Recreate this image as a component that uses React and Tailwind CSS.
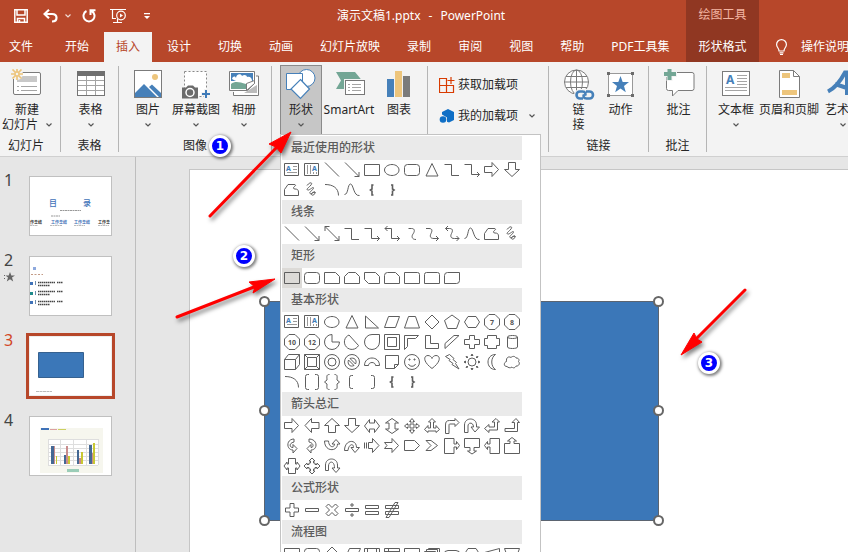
import React, { useState } from "react";

const Chevron = ({ className = "" }) => (
  <svg width="6" height="4" viewBox="0 0 6 4" fill="none" stroke="currentColor" strokeWidth="1.2" className={className}>
    <path d="M.5 .5L3 3 5.5 .5" />
  </svg>
);

const Icon = ({ children }) => (
  <svg width="32" height="32" viewBox="0 0 32 32" fill="none" className="block h-8 w-8 shrink-0">
    {children}
  </svg>
);

// ---------- ribbon icons ----------
const icons = {
  newSlide: (
    <Icon>
      <rect x="2.500" y="3.500" width="27" height="22" rx="1.500" fill="#fff" stroke="#7b7b7b" />
      <path d="M11 7h15v6H6v-3z" fill="#c8c8c8" />
      <path d="M6 17.500h2M10 17.500h16M6 21.500h2M10 21.500h16" stroke="#a5a5a5" />
      <circle cx="6" cy="5" r="6" fill="#f3f3f3" />
      <circle cx="6" cy="5" r="2" stroke="#edc57c" strokeWidth="1.500" />
      <path d="M6-1v4M6 7v4M0 5h4M8 5h4M1.500 .5l3 3M7.500 6.500l3 3M10.500 .5l-3 3M4.500 6.500l-3 3" stroke="#edc57c" strokeWidth="1.700" />
    </Icon>
  ),
  table: (
    <Icon>
      <rect x="2.500" y="2.500" width="27" height="24" fill="#fff" stroke="#747474" />
      <path d="M2 2h28v5H2z" fill="#6f6f6f" />
      <path d="M11.500 7v19M20.500 7v19M3 11.500h26M3 16.500h26M3 21.500h26" stroke="#a3a3a3" />
    </Icon>
  ),
  picture: (
    <Icon>
      <rect x="2.500" y="1.500" width="27" height="27" fill="#fff" stroke="#7b7b7b" />
      <circle cx="23" cy="8" r="3" fill="#edc57c" />
      <path d="M3 24l9-9 13 13H3z" fill="#4680b9" />
      <path d="M17 18l3-2.500 9 8.500v4h-2z" fill="#4680b9" />
    </Icon>
  ),
  screenshot: (
    <Icon>
      <rect x="4.500" y="2.500" width="22" height="25" fill="#fff" stroke="#888" strokeDasharray="2 2" />
      <path d="M2 18.500h4l2-2h5l2 2h3v11H2z" fill="#6b6b6b" />
      <circle cx="10" cy="23.500" r="4" fill="#6b6b6b" stroke="#fff" strokeWidth="1.500" />
      <path d="M26 20v10M21 25h10" stroke="#f3f3f3" strokeWidth="4" />
      <path d="M26 21v8M22 25h8" stroke="#3f7bb8" strokeWidth="2" />
    </Icon>
  ),
  album: (
    <Icon>
      <path d="M28 7h2.500v19.500h-25V23" fill="#fff" stroke="#7b7b7b" />
      <path d="M16 24h13v-8z" fill="#bbb" />
      <path d="M1.500 2.500h25v12l-7 7h-18z" fill="#fff" stroke="#7b7b7b" />
      <path d="M3 4h22v8H3z" fill="#4680b9" />
      <path d="M4 10c1-3 3-3 4-1 0-4 5-5 6-2 2-2 5-1 5 1 3-1 5 1 5 4-6 3-14 2-20-2z" fill="#fff" />
      <path d="M3 15c4-3 8-2 15 0v5H3z" fill="#73a695" />
      <path d="M18.500 21.500v-7l8-3v3z" fill="#fff" stroke="#7b7b7b" />
    </Icon>
  ),
  shapes: (
    <Icon>
      <circle cx="21.500" cy="9" r="8.500" fill="#fff" stroke="#4680b9" />
      <path d="M1.500 4.500h16v16h-16z" fill="#fff" stroke="#4680b9" />
      <path d="M15.500 10.500l9 9.500-9 9.500L6 20z" fill="#fff" stroke="#4680b9" strokeWidth="1.200" />
    </Icon>
  ),
  smartArt: (
    <Icon>
      <path d="M3 3h19l7 8.500-6 8.500H3l5-8.500z" fill="#73a695" />
      <rect x="11" y="10" width="21" height="17" fill="#f3f3f3" />
      <rect x="12.500" y="11.500" width="19" height="14" fill="#fff" stroke="#777" />
      <path d="M15 15.500h2M19 15.500h9M15 18.500h2M19 18.500h9M15 21.500h2M19 21.500h9" stroke="#a5a5a5" />
    </Icon>
  ),
  chart: (
    <Icon>
      <path d="M4 10h7v18H4z" fill="#4680b9" />
      <path d="M12 2h7v26h-7z" fill="#edc57c" />
      <path d="M20 7h7v21h-7z" fill="#7b7b7b" />
    </Icon>
  ),
  link: (
    <Icon>
      <circle cx="13.500" cy="13" r="12" fill="#fff" stroke="#7b7b7b" />
      <ellipse cx="13.500" cy="13" rx="6" ry="12" stroke="#7b7b7b" />
      <path d="M13.500 1v24M1.500 13h24M3 7.500h21M3 18.500h21" stroke="#7b7b7b" />
      <rect x="11" y="20" width="21" height="12" rx="6" fill="#f3f3f3" />
      <path d="M20 29.500h-3a3.500 3.500 0 010-7h2.500c3 0 3.500 2.500 2.500 4M23 22.500h3.500a3.500 3.500 0 010 7h-3c-3 0-3.500-2.500-2.500-4" stroke="#4680b9" strokeWidth="2.600" />
    </Icon>
  ),
  action: (
    <Icon>
      <rect x="3.500" y="4.500" width="24" height="22" fill="#fff" stroke="#999" />
      <path d="M2 3h3v3H2zM26 3h3v3h-3zM2 25h3v3H2zM26 25h3v3h-3z" fill="#6b6b6b" />
      <path d="M15.500 7l2.200 6h6.300l-5 4 1.800 6.300-5.300-3.800-5.300 3.800L12 17l-5-4h6.300z" fill="#4680b9" />
    </Icon>
  ),
  comment: (
    <Icon>
      <path d="M6 3.500h23a2 2 0 012 2v14a2 2 0 01-2 2H15l-5.500 5.500v-5.500H5.500a2 2 0 01-2-2V8" fill="#fff" stroke="#7b7b7b" />
      <path d="M6.500-1v13M0 5h14" stroke="#f3f3f3" strokeWidth="6" />
      <path d="M6.500-1v12M1 5h12" stroke="#73a695" strokeWidth="4" />
    </Icon>
  ),
  textBox: (
    <Icon>
      <rect x="2.500" y="2.500" width="27" height="24" fill="#fff" stroke="#7b7b7b" />
      <text x="6" y="15" fontSize="12" fontWeight="700" fill="#4680b9">A</text>
      <path d="M17 6.500h10M17 9.500h10M17 12.500h10M17 15.500h10M5 18.500h22M5 21.500h22" stroke="#a5a5a5" />
    </Icon>
  ),
  headerFooter: (
    <Icon>
      <path d="M6.500 1.500h14l6 6v21h-20z" fill="#fff" stroke="#7b7b7b" />
      <path d="M20.500 1.500v6h6" stroke="#7b7b7b" />
      <path d="M9 4h8v5H9zM9 21h15v5H9z" fill="#edc57c" />
    </Icon>
  ),
  wordArt: (
    <Icon>
      <path d="M1 22.500C8 19 14 11 18 3.500h2V26M8 15l12 4" stroke="#4680b9" strokeWidth="4" />
    </Icon>
  ),
};

// ---------- shape gallery, drawn on a 20x20 cell ----------
const paths = {
  line: "M3 2.500l14 14",
  arrow: "M3 2.500l14 14M17 12v4.500h-4.500",
  arrow2: "M3 2.500l14 14M17 12v4.500h-4.500M3 7V2.500h4.500",
  elbow: "M2.500 4.500h7v11h7.500",
  elbowArrow: "M2.500 4.500h7v10h8M15 12l2.500 2.500L15 17",
  elbowArrow2: "M3 4.500h6.500v10h8M15 12l2.500 2.500L15 17M5.500 2L3 4.500 5.500 7",
  curve: "M6.500 4.500h3c4 0 3 3.500 1.500 5.500s-1.500 5.500 3 5.500",
  curveArrow: "M4 4.500h3c4 0 3 3 2 5s-1.500 5 3 5h4.500M14 12l2.500 2.500L14 17",
  curveArrow2: "M3.500 4.500h4c4 0 3 3 2 5s-1.500 5 3 5h4.500M14.500 12l2.500 2.500-2.500 2.500M6 2L3.500 4.500 6 7",
  wave: "M2.500 14.500c4 0 3-10.500 6-10.500s3 12.500 9 11.500",
  freeform: "M2.500 15.500v-6l3.500-5h6c2 0 2 1 .5 2s-1.500 2.500 .5 2.500c2.500 0 3.500 1 3.500 3v3.500z",
  scribble: "M5 5.500c3-4 6-3 4-.5s-5 4-3.500 5 6-4 6-2-5 4-3.500 5.500 5-3.500 5-1-3 3.500-3.500 2 2-3 4-2",
  arc: "M3 4.500c8 0 13.500 3.500 13.500 11",
  rect: "M2.500 4.500h15v11h-15z",
  round: "M5.500 4.500h9a3 3 0 013 3v5a3 3 0 01-3 3h-9a3 3 0 01-3-3v-5a3 3 0 013-3z",
  snip1: "M2.500 4.500h11l4 4v7h-15z",
  snip2: "M2.500 15.500v-7l4-4h7l4 4v7z",
  snipDiag: "M2.500 4.500h11l4 4v7h-11l-4-4z",
  snipRound: "M2.500 15.500v-8a3 3 0 013-3h8l4 4v7z",
  round1: "M2.500 4.500h13a2 2 0 012 2v9h-15z",
  round2: "M2.500 15.500v-9a2 2 0 012-2h11a2 2 0 012 2v9z",
  roundDiag: "M2.500 15.500v-8a3 3 0 013-3h12v8a3 3 0 01-3 3z",
  oval: "M17 10c0 3-3 5.500-7 5.500S2.500 13 2.500 10 6 4.500 10 4.500 17 7 17 10z",
  triangle: "M10 3.500l6 12.500H4z",
  rightTriangle: "M3.500 4v12h13z",
  parallelogram: "M6.500 4.500h11l-4 11h-11z",
  trapezoid: "M6.500 4.500h7l4 11.500h-15z",
  diamond: "M10 3l7 7-7 7-7-7z",
  pentagon: "M10 3l7.500 5.500-3 8h-9l-3-8z",
  hexagon: "M6 4.500h8l3.500 5.500-3.500 5.500H6L2.500 10z",
  octagon: "M7 2.500h6l4.500 4.500v6L13 17.500H7L2.500 13V7z",
  pie: "M10 2.500V10h7.500A7.500 7.500 0 1110 2.500z",
  chord: "M7 3a7.500 7.500 0 109.500 10.500z",
  teardrop: "M17.500 2.500v7.500A7.500 7.500 0 1110 2.500z",
  frame: "M2.500 2.500h15v15h-15zM5.500 5.500h9v9h-9z",
  halfFrame: "M2.500 3.500h14l-3 3h-8v8l-3 3z",
  lShape: "M3.500 3.500h5v8h8v5h-13z",
  stripe: "M12 3.500h5l-14 13v-5z",
  cross: "M7.500 3.500h5v4h5v5h-5v4h-5v-4h-5v-5h5z",
  plaque: "M5.500 3.500h9v3h3v7h-3v3h-9v-3h-3v-7h3z",
  can: "M5.500 5v10c0 2 10 2 10 0V5c0-2-10-2-10 0zM5.500 5c0 2 10 2 10 0",
  cube: "M2.500 7.500l4-5h11v10l-4 5h-11zM2.500 7.500h11v10M13.500 7.500l4-5",
  bevel: "M2.500 2.500h15v15h-15zM5.500 5.500h9v9h-9zM2.500 2.500l3 3M17.500 2.500l-3 3M2.500 17.500l3-3M17.500 17.500l-3-3",
  donut: "M10 2.500a7.500 7.500 0 110 15 7.500 7.500 0 010-15zM10 6a4 4 0 110 8 4 4 0 010-8z",
  noSymbol: "M10 2.500a7.500 7.500 0 110 15 7.500 7.500 0 010-15zM6.500 8l5.500 5.500c-4 2-7-1.500-5.500-5.500zM8 6.500l5.500 5.500c2-4-1.500-7-5.500-5.500z",
  blockArc: "M2.500 13.500c0-10 15-10 15 0h-4c0-4-7-4-7 0z",
  foldedCorner: "M3.500 3.500h13v9l-4 4h-9zM12.500 16.500v-4h4",
  smiley: "M10 2.500a7.500 7.500 0 110 15 7.500 7.500 0 010-15zM6.500 12c1 3 6 3 7 0M7 7h1v1H7zM12 7h1v1h-1z",
  heart: "M10 16.500C0 9 2 3.500 6 3.500c2 0 3.500 1.500 4 3 .5-1.500 2-3 4-3 4 0 6 5.500-4 13z",
  lightning: "M3.500 4.500l4-2 4.500 4-1 1 3.500 3-1 1 3.500 5.500-7-4.500 1-1-4-3 1-1z",
  sun: "M10 6a4 4 0 110 8 4 4 0 010-8zM9 3.500l1-1.500 1 1.500zM9 16.500l1 1.500 1-1.500zM3.500 9L2 10l1.500 1zM16.500 9l1.500 1-1.500 1zM4 4.500l2 .5-1 1zM16 4.500l-2 .5 1 1zM4 15.500l2-.5-1-1zM16 15.500l-2-.5 1-1z",
  moon: "M13.500 2.500c-10 0-10 15 0 15-5-3-5-12 0-15z",
  cloud: "M5 14.500c-4 0-3-4.500-.5-5-.5-4 2-5.500 4.500-4 2-2 4.500-1 5 .5 3 0 3.500 2 2.500 3.500 2 2 0 5-2.500 4.500-1 2.500-3.500 2-4 1-2 1.500-4 .5-5-.5z",
  bracketPair: "M7 2.500H5.500a2 2 0 00-2 2v11a2 2 0 002 2H7M13 2.500h1.500a2 2 0 012 2v11a2 2 0 01-2 2H13",
  bracePair: "M7.500 2.500C4 2.500 5 5 5 8l-2.500 2L5 12c0 3-1 5.500 2.500 5.500M12.500 2.500C16 2.500 15 5 15 8l2.500 2-2.500 2c0 3 1 5.500-2.500 5.500",
  bracketL: "M11 3.500H9.500a2 2 0 00-2 2v9a2 2 0 002 2H11",
  bracketR: "M9 3.500h1.500a2 2 0 012 2v9a2 2 0 01-2 2H9",
  aRight: "M2.500 6.500h7.500v-4l6.500 7-6.500 7v-4H2.500z",
  aLeft: "M17 6.500H9.500v-4L3 9.500l6.500 7v-4H17z",
  aUp: "M6.500 16.500V9.500h-4l7.500-7 7.500 7h-4v7z",
  aDown: "M6.500 2.500v7h-4l7.500 7 7.500-7h-4v-7z",
  aLR: "M2.500 10l5-6.500V7h5V3.500l5 6.500-5 6.500V13h-5v3.500z",
  aUD: "M10 2.500L16.500 7H13v6h3.500L10 17.500 3.500 13H7V7H3.500z",
  aQuad: "M10 2.500L12.500 5.500h-1.500v3.500h3.500V7.500l3 2.500-3 2.500V11H11v3.500h1.500L10 17.500 7.500 14.500H9V11H5.500v1.500l-3-2.500 3-2.500V9H9V5.500H7.500z",
  aTri: "M10 2.500L13.500 6h-2v6H14v-2.500l3.500 4-3.500 3V15H6v1.500l-3.500-3 3.500-4V12h2.500V6h-2z",
  aBent: "M3.500 17.500V9c0-3 1-4.500 4-4.500h5.500V2.500l4 4-4 4v-2.500H8c-1 0-1 .5-1 2v7.500z",
  aUturn: "M2.500 16.500V9c0-8 12-8 12 0v2h3l-4.500 5L9 11h2.500c0-5-5.500-5-5.500-1v6.500z",
  aLeftUp: "M2.500 12.500L7 8.500v2.500h5.500v-5H10l4-3.500 3.500 3.500H15.500v8H7v2.500z",
  aBentUp: "M3 12.500h9.500v-6H10l4-4 3.500 4H15.500v9H3z",
  aCurveR: "M12 3c-8 0-8 11-1 11v3l4-4.500-4-4v3C7 11.500 7 7 12 6z",
  aCurveL: "M7 3c9 0 9 11 2 11v3l-4-4.500 4-4v3c3 0 3-4.500-2-5.500z",
  aCurveU: "M2.500 5c0 11 13 11 13 3h2.500l-4-4.500L10 8h2.500c0 4-5.500 4-6-3z",
  aCurveD: "M2.500 14.500c0-11 12-12 12-3h3L13 16.500 9 11.500h2.500c0-5-5-3-5.500 3z",
  aStriped: "M2.500 6.500v6M4.500 6.500v6M6.500 6.500h4v-4l6.500 7-6.500 7v-4h-4z",
  aNotched: "M2.500 6.500h7.500v-4l6.500 7-6.500 7v-4H2.500l2.500-3z",
  aPentagon: "M2.500 4.500h10l5 5-5 5h-10z",
  aChevron: "M4 4.500h5l6.500 5-6.500 5H4l5-5z",
  cRight: "M2.500 2.500h9.500V8h2.500V5.500l3 4-3 4V11H12v6.500H2.500z",
  cDown: "M2.500 2.500h15v9H12V15h2.500L10 18l-4.500-3H8v-3.500H2.500z",
  cLeft: "M17.500 2.500H8V8H5.500V5.500l-3 4 3 4V11H8v6.500h9.500z",
  cUp: "M2.500 17.500h15V7.500H12V5h2.500L10 1.500 5.500 5H8v2.500H2.500z",
  cLR: "M6.500 2.500h7V8h1.500V6l3 4-3 4v-2h-1.500v5.500h-7V12H5v2l-3-4 3-4v2h1.500z",
  cQuad: "M10 2l3 3h-1.500v2H13v1.500h2V7l3 3-3 3v-1.500h-2V13h-1.500v2H13l-3 3-3-3h1.500v-2H7v-1.500H5V13l-3-3 3-3v1.500h2V7h1.500V5H7z",
  circular: "M3.500 14.500V9c0-8 12-8 12 0v3h2.500l-4 4.500-4-4.500h2.500c0-8-6-7-6-2v4.500z",
  plus: "M8 3.500h4V8h4.500v4H12v4.500H8V12H3.500V8H8z",
  minus: "M3.500 8.500h13v3h-13z",
  times: "M6.500 4L10 7.500 13.500 4 16 6.500 12.500 10l3.500 3.500-2.500 2.500-3.500-3.500L6.500 16 4 13.500 7.500 10 4 6.500z",
  divide: "M3.500 8.500h13v3h-13zM9 4h2v2H9zM9 14h2v2H9z",
  equal: "M3.500 5.500h13v3h-13zM3.500 11.500h13v3h-13z",
  notEqual: "M3.500 5.500h13v3h-13zM3.500 11.500h13v3h-13zM13 2.500h3l-9 15H4z",
  fData: "M7.500 4.500h11l-5 11H2.500z",
  fPredef: "M2.500 4.500h15v11h-15zM5.500 4.500v11M14.500 4.500v11",
  fInternal: "M2.500 4.500h15v11h-15zM6.500 4.500v11M2.500 7.500h15",
  fMulti: "M2.500 7.500h11v8h-11zM4.500 7.500v-2h11v8h-2M6.500 5.500v-1h11v8h-2",
  fTerm: "M6 6.500h8a4 4 0 010 8H6a4 4 0 010-8z",
  fManual: "M2.500 8.500l15-4v11h-15z",
  fOp: "M2.500 4.500h15l-4 11h-7z",
};

// braces are drawn heavier than the other outlines
const heavyPaths = {
  braceL: "M11.500 5H10v4l-1.500 1 1.500 1v4h1.500",
  braceR: "M9 5h1.500v4l1.500 1-1.500 1v4H9",
};

const sections = [
  {
    title: "最近使用的形状",
    shapes: "text vtext line arrow rect oval round triangle elbow elbowArrow aRight aDown freeform scribble arc wave braceL braceR",
  },
  {
    title: "线条",
    shapes: "line arrow arrow2 elbow elbowArrow elbowArrow2 curve curveArrow curveArrow2 wave freeform scribble",
  },
  { title: "矩形", shapes: "rect round snip1 snip2 snipDiag snipRound round1 round2 roundDiag" },
  {
    title: "基本形状",
    shapes:
      "text vtext oval triangle rightTriangle parallelogram trapezoid diamond pentagon hexagon n7 n8 n10 n12 pie chord teardrop frame halfFrame lShape stripe cross plaque can cube bevel donut noSymbol blockArc foldedCorner smiley heart lightning sun moon cloud arc bracketPair bracePair bracketL bracketR braceL braceR",
  },
  {
    title: "箭头总汇",
    shapes:
      "aRight aLeft aUp aDown aLR aUD aQuad aTri aBent aUturn aLeftUp aBentUp aCurveR aCurveL aCurveU aCurveD aStriped aNotched aPentagon aChevron cRight cDown cLeft cUp cLR cQuad circular",
  },
  { title: "公式形状", shapes: "plus minus times divide equal notEqual" },
  {
    title: "流程图",
    shapes: "rect round diamond fData fPredef fInternal rect fMulti fTerm hexagon fManual fOp",
  },
];

const Shape = ({ name }) => {
  const number = /^n(\d+)$/.exec(name);
  return (
    <svg width="20" height="20" viewBox="0 0 20 20" fill="none" stroke="#5e5e5e" className="block">
      {name === "text" && (
        <>
          <path d="M2.500 3.500h14v12h-14z" />
          <path d="M11 6.500h4M11 9.500h4M5 12.500h10" stroke="#999" />
          <text x="4" y="11" fontSize="7" fontWeight="700" fill="#3f7bb8" stroke="none">A</text>
        </>
      )}
      {name === "vtext" && (
        <>
          <path d="M2.500 3.500h14v12h-14z" />
          <path d="M5.500 5v9M8.500 5v9M11.500 12v2M14.500 12v2" stroke="#999" />
          <text x="10" y="11" fontSize="7" fontWeight="700" fill="#3f7bb8" stroke="none">A</text>
        </>
      )}
      {number && (
        <>
          <path d={paths.octagon} />
          <text x="10" y="13" fontSize="7" fontWeight="700" textAnchor="middle" fill="#555" stroke="none">
            {number[1]}
          </text>
        </>
      )}
      {paths[name] && <path d={paths[name]} />}
      {heavyPaths[name] && <path d={heavyPaths[name]} strokeWidth="1.600" />}
    </svg>
  );
};

const ShapesMenu = () => (
  <div className="absolute top-[134px] bottom-0 left-[280px] z-10 w-[261px] overflow-hidden border border-b-0 border-[#c3c3c3] bg-white p-px">
    {sections.map((section) => (
      <section key={section.title} className="w-60">
        <h3 className="h-6 bg-[#eaeaea] pl-[9px] text-xs leading-6 font-medium text-[#5c5c5c]">{section.title}</h3>
        <div className="grid grid-cols-12">
          {section.shapes.split(" ").map((name, i) => (
            <button
              key={i}
              type="button"
              aria-label={name}
              className={section.title === "矩形" && i === 0 ? "h-5 bg-[#dcdad7]" : "h-5 hover:bg-gray-200"}
            >
              <Shape name={name} />
            </button>
          ))}
        </div>
      </section>
    ))}
  </div>
);

const RibbonButton = ({ icon, label, second, arrow, active, width }) => (
  <button
    type="button"
    className={`flex h-[70px] shrink-0 flex-col items-center border pt-[3px] whitespace-nowrap ${width} ${
      active ? "border-[#8a8a8a] bg-[#c6c6c6]" : "border-transparent"
    }`}
  >
    {icons[icon]}
    <span className="mt-px leading-[15px]">{label}</span>
    <span className="flex h-[15px] items-center gap-2 leading-[15px]">
      {second}
      {arrow && <Chevron className="text-[#555]" />}
    </span>
  </button>
);

const Group = ({ label, width, children, align = "justify-center pl-0.5" }) => (
  <div className={`flex shrink-0 flex-col ${width}`}>
    <div className={`flex h-[73px] ${align}`}>{children}</div>
    <div className="text-center leading-[15px]">{label}</div>
  </div>
);

const Divider = () => <div className="mt-px mb-1 w-px shrink-0 bg-[#b5b5b5]" />;

const Ribbon = () => (
  <div className="flex h-[95px] shrink-0 overflow-hidden border-b border-[#d0d0d0] bg-[#f3f3f3] pt-[3px] text-xs text-[#262626]">
    <Group label="幻灯片" width="w-[52px]">
      <RibbonButton icon="newSlide" label="新建" second="幻灯片" arrow width="w-[52px]" />
    </Group>
    <div className="w-2 shrink-0" />
    <Divider />
    <Group label="表格" width="w-[57px]">
      <RibbonButton icon="table" label="表格" arrow width="w-12" />
    </Group>
    <Divider />
    <Group label="图像" width="w-[152px]">
      <RibbonButton icon="picture" label="图片" arrow width="w-12" />
      <RibbonButton icon="screenshot" label="屏幕截图" arrow width="w-12" />
      <RibbonButton icon="album" label="相册" arrow width="w-12" />
    </Group>
    <Divider />
    <Group width="w-[155px]" align="justify-start pl-2">
      <RibbonButton icon="shapes" label="形状" arrow active width="w-[42px]" />
      <RibbonButton icon="smartArt" label="SmartArt" width="w-[54px]" />
      <RibbonButton icon="chart" label="图表" width="w-[46px]" />
    </Group>
    <Divider />
    <Group width="w-[120px]" align="flex-col pt-1 pl-[11px]">
      <button type="button" className="flex h-[31px] items-center gap-[3px]">
        <svg width="16" height="16" viewBox="0 0 16 16" fill="none" stroke="#d83b01">
          <path d="M.5 1.500h7v14h-7zM.5 8.500h14v7H.5M12 0v7M8.500 3.500h7" strokeWidth="1.200" />
        </svg>
        获取加载项
      </button>
      <button type="button" className="flex h-[31px] items-center gap-[3px]">
        <svg width="16" height="16" viewBox="0 0 16 16" fill="#0f6fc6">
          <path d="M9 1l6 3v8l-5 2.500-2-.8V9.500L3 6.500V4z" />
          <circle cx="4" cy="11.500" r="3.300" />
        </svg>
        我的加载项
        <Chevron className="ml-2 text-[#555]" />
      </button>
    </Group>
    <Divider />
    <Group label="链接" width="w-[99px]">
      <RibbonButton icon="link" label="链" second="接" width="w-[42px]" />
      <RibbonButton icon="action" label="动作" width="w-[42px]" />
    </Group>
    <Divider />
    <Group label="批注" width="w-[57px]">
      <RibbonButton icon="comment" label="批注" width="w-12" />
    </Group>
    <Divider />
    <Group width="w-[170px]" align="justify-start pl-1.5">
      <RibbonButton icon="textBox" label="文本框" arrow width="w-[46px]" />
      <RibbonButton icon="headerFooter" label="页眉和页脚" width="w-[60px]" />
      <RibbonButton icon="wordArt" label="艺术字" arrow width="w-12" />
    </Group>
  </div>
);

const tabs = ["开始", "插入", "设计", "切换", "动画", "幻灯片放映", "录制", "审阅", "视图", "帮助", "PDF工具集"];

const Header = ({ tab, setTab }) => (
  <header className="flex h-[62px] shrink-0 overflow-hidden bg-[#b7472a] text-xs whitespace-nowrap text-white">
    <div className="w-[686px] shrink-0">
      <div className="flex h-8 items-center pl-3.5">
        <button type="button" aria-label="保存">
          <svg width="14" height="14" viewBox="0 0 14 14" fill="none" stroke="#fff" strokeWidth="1.500">
            <path d="M.8.8h12.400v12.400H.8zM3 1v5h8V1M3.500 13V9.500h7V13M5.500 13v-2" />
          </svg>
        </button>
        <button type="button" aria-label="撤消" className="ml-[15px] flex items-center gap-[7px]">
          <svg width="15" height="14" viewBox="0 0 15 14" fill="none" stroke="#fff" strokeWidth="2.200">
            <path d="M6 .8L1.500 5 6 9.200M2 5h7c6 0 6 7.500 0 7.500" />
          </svg>
          <Chevron className="opacity-80" />
        </button>
        <button type="button" aria-label="恢复" className="ml-[11px]">
          <svg width="14" height="14" viewBox="0 0 14 14" fill="none" stroke="#fff" strokeWidth="2">
            <path d="M4.500 2A5.500 5.500 0 109.500 2M8.500 6V1.200h5" />
          </svg>
        </button>
        <button type="button" aria-label="从头开始" className="ml-3.5">
          <svg width="17" height="16" viewBox="0 0 17 16" fill="none" stroke="#fff" strokeWidth="1.200">
            <path d="M0 1.500h16M2.500 2v8.500H6M7.500 11v3M3 14.500h9" />
            <circle cx="11" cy="7.500" r="4.300" />
            <path d="M10 5.500v4l3-2z" fill="#fff" stroke="none" />
          </svg>
        </button>
        <button type="button" aria-label="自定义快速访问工具栏" className="ml-[17px]">
          <svg width="6" height="7" viewBox="0 0 6 7" fill="#fff">
            <path d="M0 0h6v1.200H0zM0 3h6L3 6z" />
          </svg>
        </button>
        <h1 className="ml-[187px] flex gap-2 leading-4">
          <span>演示文稿1.pptx</span>
          <span>-</span>
          <span>PowerPoint</span>
        </h1>
      </div>
      <nav className="flex h-[30px] gap-[3px]">
        <button type="button" className="mr-[17px] pl-[9px]">文件</button>
        {tabs.map((name) => (
          <button
            key={name}
            type="button"
            onClick={() => setTab(name)}
            className={`px-3 ${tab === name ? "bg-[#f3f3f3] text-[#b7472a]" : ""}`}
          >
            {name}
          </button>
        ))}
      </nav>
    </div>
    <div className="w-[73px] shrink-0 bg-[#903722] text-center">
      <div className="h-8 leading-[30px] text-[#f3b5a3]">绘图工具</div>
      <button type="button" className="h-[30px]">形状格式</button>
    </div>
    <button type="button" className="flex h-[30px] items-center gap-3.5 self-end pl-[17px]">
      <svg width="11" height="16" viewBox="0 0 11 16" fill="none" stroke="#fff" strokeWidth="1.200">
        <path d="M3 12c0-3-2.400-3.500-2.400-6.500a4.900 4.900 0 019.800 0C10.400 8.500 8 9 8 12zM3.500 13.800h4M4 15.500h3" />
      </svg>
      操作说明搜索
    </button>
  </header>
);

// ---------- slide thumbnails ----------
const previews = [
  <>
    <g fill="#3f72b8" fontSize="8" fontWeight="500">
      <text x="19" y="29">目</text>
      <text x="53" y="29">录</text>
    </g>
    <path d="M30 33.500h21M21 39h9" stroke="#999" strokeDasharray="2 .5" />
    <g fontSize="4" fontWeight="700" fill="#3f72b8">
      <text x="0" y="47" fill="#333">作总结</text>
      <text x="21" y="47">工作总结</text>
      <text x="44" y="47">工作总结</text>
      <text x="68" y="47" fill="#333">工作总</text>
    </g>
    <path d="M0 48.500h8M20 48.500h12M44 48.500h11M68 48.500h11" stroke="#bbb" strokeDasharray="2 .5" />
  </>,
  <>
    <path d="M3 10h3v3H3z" fill="#8ea9dd" />
    <path d="M1 17.500h12" stroke="#c39a85" strokeDasharray="2 1.500" />
    <path d="M0 25h3v3H0zM0 44h3v3H0z" fill="#3f72b8" />
    <path d="M0 35h3v3H0z" fill="#1f8a8a" />
    <path d="M5.500 24v4M5.500 34v4M5.500 43v4" stroke="#6f8fb0" />
    <path d="M8 25.500h17M27 25.500h6M8 34.500h17M27 34.500h6M8 44.500h17M27 44.500h6M8 28.500h12M8 37.500h12M8 47.500h12" stroke="#444" strokeWidth="1.500" strokeDasharray="1.500 .5" />
  </>,
  <>
    <path d="M8.500 15.500h45v25h-45z" fill="#3b77b8" stroke="#36618f" />
    <path d="M6 54.500h16" stroke="#bbb" strokeDasharray="3 .5" />
  </>,
  <>
    <path d="M10 11h63v45H10z" fill="#f6f6ee" />
    <path d="M11 11h8v2h-8z" fill="#3f72b8" />
    <path d="M20 12.500h7" stroke="#dba0a0" />
    <path d="M28 12.500h8" stroke="#cccf60" />
    <path d="M18 22h50v26H18z" fill="#fff" />
    <path d="M18 22.500h50M18 27.500h50M18 31.500h50M18 35.500h50M18 39.500h50M18 43.500h50M18 48.500h50M18.500 22v26M30.500 22v26M43.500 22v26M56.500 22v26M68.500 22v26" stroke="#dedede" />
    <path d="M21 29h3v18h-3zM34 38h2v9h-2zM47 33h2v14h-2zM59 28h3v19h-3z" fill="#456894" />
    <path d="M24 29h1v18h-1zM36 29h2v18h-2zM49 41h2v6h-2zM62 36h1v11h-1z" fill="#c98c8c" />
    <path d="M26 39h1v8h-1zM38 39h2v8h-2zM51 35h2v12h-2zM63 26h2v21h-2z" fill="#c8c832" />
    <path d="M37 52h12v3H37z" fill="#9bcdb8" />
  </>,
];

const SlideList = () => (
  <aside className="flex w-[136px] shrink-0 flex-col gap-5 border-r border-[#bebebe] pt-[19px]">
    {previews.map((preview, i) => (
      <button key={i} type="button" aria-label={`幻灯片 ${i + 1}`} className="flex h-[60px] items-start text-left">
        <span className={`w-[29px] shrink-0 pl-1 text-base leading-2 ${i === 2 ? "text-[#d24726]" : "text-[#444]"}`}>
          {i + 1}
          {i === 1 && (
            <svg width="11" height="10" viewBox="0 0 11 10" fill="#666" className="mt-2 block">
              <path d="M6 0l1.300 3.400H11L8 5.600 9.200 9.500 6 7.200 2.800 9.500 4 5.600 1.500 3.400h3.200zM0 3h1v1H0zM0 6h1v1H0z" />
            </svg>
          )}
        </span>
        <svg
          viewBox="0 0 81 58"
          className={`h-[60px] w-[83px] border bg-white ${
            i === 2 ? "border-[#eee] outline-3 outline-[#b7472a]" : "border-[#c0c0c0]"
          }`}
        >
          {preview}
        </svg>
      </button>
    ))}
  </aside>
);

const handles = [
  "-top-[6px] -left-[6px]",
  "-top-[6px] -right-[6px]",
  "top-[103px] -left-[6px]",
  "top-[103px] -right-[6px]",
  "-bottom-[6px] -left-[6px]",
  "-bottom-[6px] -right-[6px]",
];

// ---------- red pointers and numbered markers ----------
const steps = [
  { n: 1, place: "top-[135px] left-[209px]" },
  { n: 2, place: "top-[245px] left-[233px]" },
  { n: 3, place: "top-[352px] left-[698px]" },
];

const Annotations = () => (
  <>
    <svg className="pointer-events-none absolute inset-0 z-20 h-full w-full drop-shadow-[2px_3px_2px_rgba(0,0,0,0.5)]">
      <g stroke="#f00" strokeWidth="3" strokeLinecap="round">
        <path d="M210 216l67-69" />
        <path d="M177 317l77-30" />
        <path d="M745 290l-49 49" />
      </g>
      <g fill="#f00" stroke="#f00" strokeLinejoin="round">
        <path d="M291 132l-22 12 7 3 5 6z" />
        <path d="M275 279l-26 3 6 5-2 6z" />
        <path d="M681 355l13-22 3 6 5 3z" />
      </g>
    </svg>
    {steps.map(({ n, place }) => (
      <span
        key={n}
        className={`absolute z-20 flex size-[22px] items-center justify-center rounded-full border-3 border-white bg-[#00f] font-['DejaVu_Sans'] text-xs leading-none font-bold text-white shadow-[1px_1px_3px_1px_rgba(0,0,0,0.5)] ${place}`}
      >
        {n}
      </span>
    ))}
  </>
);

const App = () => {
  const [tab, setTab] = useState("插入");

  return (
    <div className="relative flex h-screen flex-col overflow-hidden bg-[#e6e6e6] font-['Noto_Sans','Noto_Sans_CJK_SC',sans-serif]">
      <Header tab={tab} setTab={setTab} />
      <Ribbon />
      <div className="flex min-h-0 flex-1">
        <SlideList />
        <main className="min-w-0 flex-1 overflow-hidden pt-3 pl-[53px]">
          <div className="relative h-full border-t border-l border-[#c6c6c6] bg-white">
            <div className="absolute top-[131px] left-[74px] h-[220px] w-[395px] border border-[#5b6470] bg-[#3b77b8]">
              {handles.map((place) => (
                <i key={place} className={`absolute size-[11px] rounded-full border-2 border-[#666] bg-white ${place}`} />
              ))}
            </div>
          </div>
        </main>
      </div>
      <ShapesMenu />
      <Annotations />
    </div>
  );
};

export default App;
